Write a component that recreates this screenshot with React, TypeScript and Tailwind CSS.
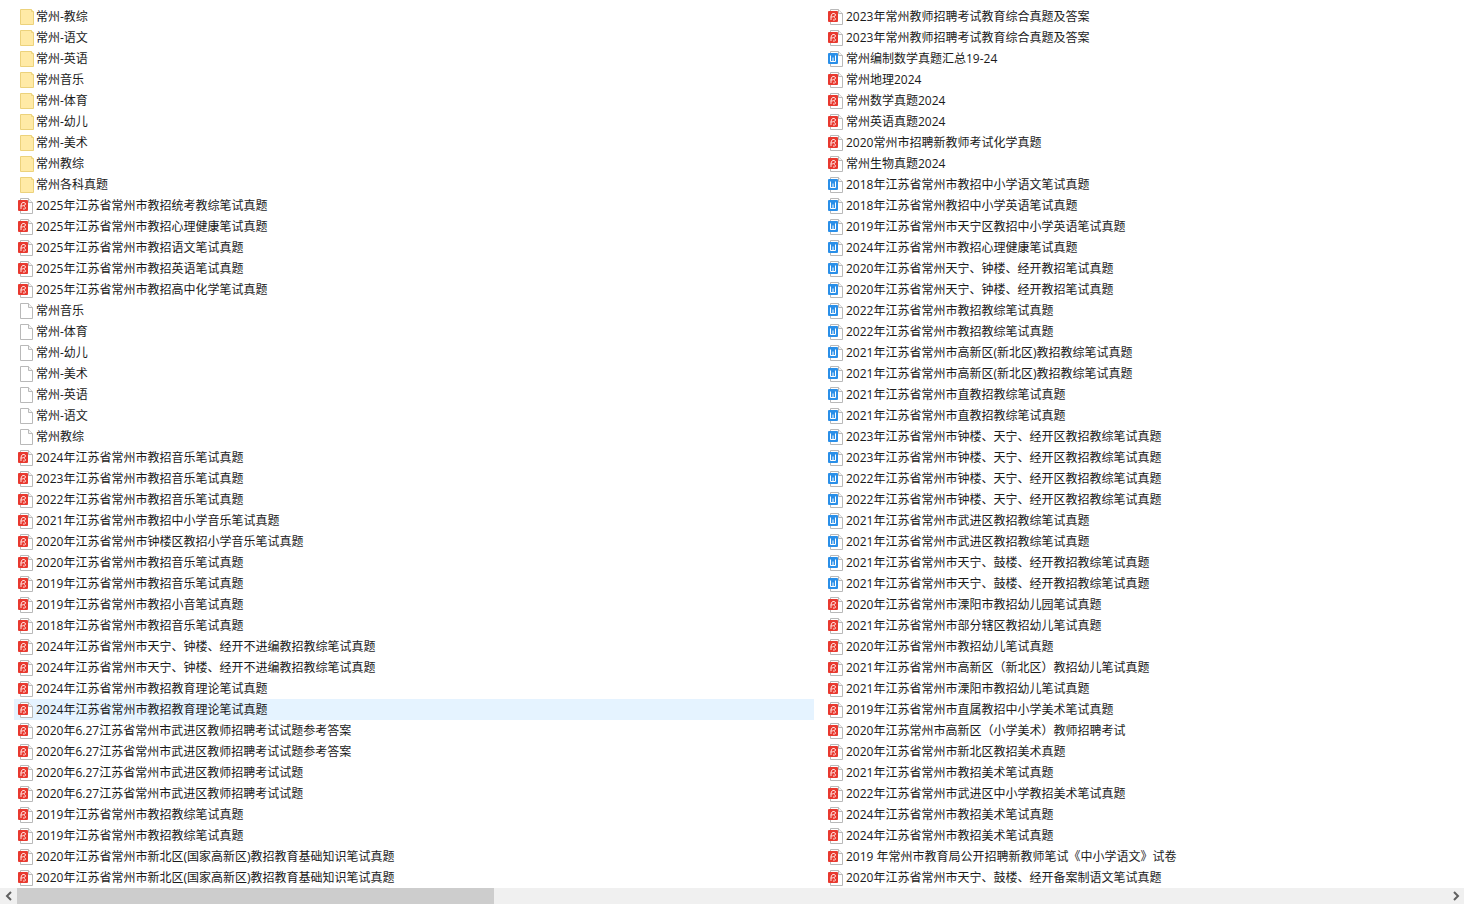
import React from 'react';

type Kind = 'folder' | 'blank' | 'pdf' | 'word';
type Row = [Kind, string];

const left: Row[] = [
    ['folder', '常州-教综'],
    ['folder', '常州-语文'],
    ['folder', '常州-英语'],
    ['folder', '常州音乐'],
    ['folder', '常州-体育'],
    ['folder', '常州-幼儿'],
    ['folder', '常州-美术'],
    ['folder', '常州教综'],
    ['folder', '常州各科真题'],
    ['pdf', '2025年江苏省常州市教招统考教综笔试真题'],
    ['pdf', '2025年江苏省常州市教招心理健康笔试真题'],
    ['pdf', '2025年江苏省常州市教招语文笔试真题'],
    ['pdf', '2025年江苏省常州市教招英语笔试真题'],
    ['pdf', '2025年江苏省常州市教招高中化学笔试真题'],
    ['blank', '常州音乐'],
    ['blank', '常州-体育'],
    ['blank', '常州-幼儿'],
    ['blank', '常州-美术'],
    ['blank', '常州-英语'],
    ['blank', '常州-语文'],
    ['blank', '常州教综'],
    ['pdf', '2024年江苏省常州市教招音乐笔试真题'],
    ['pdf', '2023年江苏省常州市教招音乐笔试真题'],
    ['pdf', '2022年江苏省常州市教招音乐笔试真题'],
    ['pdf', '2021年江苏省常州市教招中小学音乐笔试真题'],
    ['pdf', '2020年江苏省常州市钟楼区教招小学音乐笔试真题'],
    ['pdf', '2020年江苏省常州市教招音乐笔试真题'],
    ['pdf', '2019年江苏省常州市教招音乐笔试真题'],
    ['pdf', '2019年江苏省常州市教招小音笔试真题'],
    ['pdf', '2018年江苏省常州市教招音乐笔试真题'],
    ['pdf', '2024年江苏省常州市天宁、钟楼、经开不进编教招教综笔试真题'],
    ['pdf', '2024年江苏省常州市天宁、钟楼、经开不进编教招教综笔试真题'],
    ['pdf', '2024年江苏省常州市教招教育理论笔试真题'],
    ['pdf', '2024年江苏省常州市教招教育理论笔试真题'],
    ['pdf', '2020年6.27江苏省常州市武进区教师招聘考试试题参考答案'],
    ['pdf', '2020年6.27江苏省常州市武进区教师招聘考试试题参考答案'],
    ['pdf', '2020年6.27江苏省常州市武进区教师招聘考试试题'],
    ['pdf', '2020年6.27江苏省常州市武进区教师招聘考试试题'],
    ['pdf', '2019年江苏省常州市教招教综笔试真题'],
    ['pdf', '2019年江苏省常州市教招教综笔试真题'],
    ['pdf', '2020年江苏省常州市新北区(国家高新区)教招教育基础知识笔试真题'],
    ['pdf', '2020年江苏省常州市新北区(国家高新区)教招教育基础知识笔试真题'],
];

const right: Row[] = [
    ['pdf', '2023年常州教师招聘考试教育综合真题及答案'],
    ['pdf', '2023年常州教师招聘考试教育综合真题及答案'],
    ['word', '常州编制数学真题汇总19-24'],
    ['pdf', '常州地理2024'],
    ['pdf', '常州数学真题2024'],
    ['pdf', '常州英语真题2024'],
    ['pdf', '2020常州市招聘新教师考试化学真题'],
    ['pdf', '常州生物真题2024'],
    ['word', '2018年江苏省常州市教招中小学语文笔试真题'],
    ['word', '2018年江苏省常州教招中小学英语笔试真题'],
    ['word', '2019年江苏省常州市天宁区教招中小学英语笔试真题'],
    ['word', '2024年江苏省常州市教招心理健康笔试真题'],
    ['word', '2020年江苏省常州天宁、钟楼、经开教招笔试真题'],
    ['word', '2020年江苏省常州天宁、钟楼、经开教招笔试真题'],
    ['word', '2022年江苏省常州市教招教综笔试真题'],
    ['word', '2022年江苏省常州市教招教综笔试真题'],
    ['word', '2021年江苏省常州市高新区(新北区)教招教综笔试真题'],
    ['word', '2021年江苏省常州市高新区(新北区)教招教综笔试真题'],
    ['word', '2021年江苏省常州市直教招教综笔试真题'],
    ['word', '2021年江苏省常州市直教招教综笔试真题'],
    ['word', '2023年江苏省常州市钟楼、天宁、经开区教招教综笔试真题'],
    ['word', '2023年江苏省常州市钟楼、天宁、经开区教招教综笔试真题'],
    ['word', '2022年江苏省常州市钟楼、天宁、经开区教招教综笔试真题'],
    ['word', '2022年江苏省常州市钟楼、天宁、经开区教招教综笔试真题'],
    ['word', '2021年江苏省常州市武进区教招教综笔试真题'],
    ['word', '2021年江苏省常州市武进区教招教综笔试真题'],
    ['word', '2021年江苏省常州市天宁、鼓楼、经开教招教综笔试真题'],
    ['word', '2021年江苏省常州市天宁、鼓楼、经开教招教综笔试真题'],
    ['pdf', '2020年江苏省常州市溧阳市教招幼儿园笔试真题'],
    ['pdf', '2021年江苏省常州市部分辖区教招幼儿笔试真题'],
    ['pdf', '2020年江苏省常州市教招幼儿笔试真题'],
    ['pdf', '2021年江苏省常州市高新区（新北区）教招幼儿笔试真题'],
    ['pdf', '2021年江苏省常州市溧阳市教招幼儿笔试真题'],
    ['pdf', '2019年江苏省常州市直属教招中小学美术笔试真题'],
    ['pdf', '2020年江苏常州市高新区（小学美术）教师招聘考试'],
    ['pdf', '2020年江苏省常州市新北区教招美术真题'],
    ['pdf', '2021年江苏省常州市教招美术笔试真题'],
    ['pdf', '2022年江苏省常州市武进区中小学教招美术笔试真题'],
    ['pdf', '2024年江苏省常州市教招美术笔试真题'],
    ['pdf', '2024年江苏省常州市教招美术笔试真题'],
    ['pdf', '2019 年常州市教育局公开招聘新教师笔试《中小学语文》试卷'],
    ['pdf', '2020年江苏省常州市天宁、鼓楼、经开备案制语文笔试真题'],
];

const FileIcon: React.FC<{ kind: Kind }> = ({ kind }) => {
    if (kind === 'folder') {
        return (
            <svg width="16" height="16" viewBox="0 0 16 16" className="shrink-0">
                <path d="M2.5 0.5H13.5L15.5 2.5V15.5H2.5Z" fill="#ffeaa6" stroke="#ecd27c" />
                <path d="M13.5 0.5V2.5H15.5" fill="#fff6d2" stroke="#ecd27c" />
            </svg>
        );
    }
    return (
        <svg width="16" height="16" viewBox="0 0 16 16" className="shrink-0">
            <path d="M2.5 0.5H10.5L14.5 4.5V15.5H2.5Z" fill="#ffffff" stroke="#b9b9b9" />
            <path d="M10.5 0.5V4.5H14.5" fill="#f4f4f4" stroke="#b9b9b9" />
            {kind === 'pdf' && (
                <>
                    <rect x="0" y="2" width="10" height="11" rx="1" fill="#e8392f" />
                    <path
                        d="M3 11C3 8 3 6 4 5C5 4 7.5 4.3 7.5 6C7.5 7.5 5 8 2.5 8M6 8.5C8 9 8 11 6.5 11H5"
                        fill="none"
                        stroke="#ffe3e0"
                        strokeWidth="1"
                    />
                </>
            )}
            {kind === 'word' && (
                <>
                    <rect x="0" y="2" width="10" height="11" rx="1" fill="#2a8fe8" />
                    <path d="M2.5 4.5V10.5H7.5V4.5M5 6.5V10.5" fill="none" stroke="#ffffff" strokeWidth="1" />
                </>
            )}
        </svg>
    );
};

const FileColumn: React.FC<{ rows: Row[]; selected?: number }> = ({ rows, selected }) => (
    <div className="w-[810px] shrink-0 pr-[10px]">
        {rows.map(([kind, name], i) => (
            <div
                key={i}
                className={`flex h-[21px] items-center pl-1 ${i === selected ? 'bg-[#e5f3ff]' : ''}`}
            >
                <FileIcon kind={kind} />
                <span className="ml-[2px] whitespace-nowrap text-xs text-[#1a1a1a]">{name}</span>
            </div>
        ))}
    </div>
);

export default function App() {
    return (
        <div
            className="flex h-[904px] w-[1464px] flex-col overflow-hidden bg-white"
            style={{ fontFamily: '"Open Sans", "Noto Sans CJK SC", sans-serif' }}
        >
            <div className="flex h-[888px] overflow-hidden pl-[14px] pt-[6px]">
                <FileColumn rows={left} selected={33} />
                <FileColumn rows={right} />
            </div>
            <div className="flex h-4 items-center bg-[#f0f0f0]">
                <div className="flex w-[17px] justify-center">
                    <svg width="8" height="10" viewBox="0 0 8 10">
                        <path d="M6 1L2 5L6 9" fill="none" stroke="#606060" strokeWidth="2" />
                    </svg>
                </div>
                <div className="h-4 w-[477px] bg-[#cdcdcd]" />
                <div className="flex-1" />
                <div className="flex w-[17px] justify-center">
                    <svg width="8" height="10" viewBox="0 0 8 10">
                        <path d="M2 1L6 5L2 9" fill="none" stroke="#606060" strokeWidth="2" />
                    </svg>
                </div>
            </div>
        </div>
    );
}
